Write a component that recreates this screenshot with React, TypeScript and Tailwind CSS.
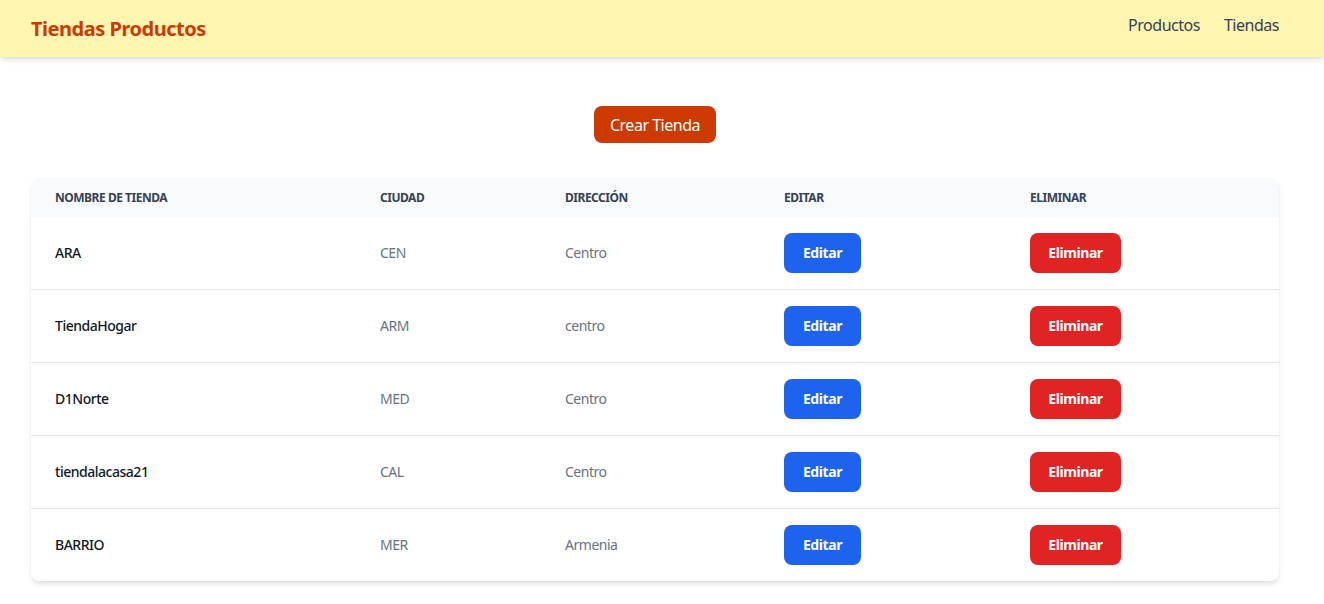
import React from "react";

const rows = [
  { name: "ARA", city: "CEN", addr: "Centro" },
  { name: "TiendaHogar", city: "ARM", addr: "centro" },
  { name: "D1Norte", city: "MED", addr: "Centro" },
  { name: "tiendalacasa21", city: "CAL", addr: "Centro" },
  { name: "BARRIO", city: "MER", addr: "Armenia" },
];

export default function App() {
  return (
    <div className="min-h-screen bg-white tracking-[-0.03em]" style={{ fontFamily: '"Noto Sans", "Open Sans", sans-serif' }}>
      <header className="h-[57px] bg-[#fef5b1] shadow-md flex items-center justify-between pl-[31px] pr-[45px]">
        <h1 className="text-xl font-bold text-[#cc3a00]">Tiendas Productos</h1>
        <nav className="flex gap-6 text-base text-gray-700 pb-[7px]">
          <a>Productos</a>
          <a>Tiendas</a>
        </nav>
      </header>
      <main className="pl-[31px] pr-[45px]">
        <div className="flex justify-center pt-[49px] pb-[35px]">
          <button className="h-[37px] px-4 rounded-lg bg-[#cc3a00] text-white text-base tracking-[-0.03em]">Crear Tienda</button>
        </div>
        <div className="rounded-lg shadow-md overflow-hidden bg-white">
          <table className="w-full text-left table-fixed">
            <thead className="bg-gray-50">
              <tr className="h-[39px] text-xs font-bold uppercase text-gray-700">
                <th className="w-[325px] px-6">Nombre de tienda</th>
                <th className="w-[185px] px-6">Ciudad</th>
                <th className="w-[219px] px-6">Dirección</th>
                <th className="w-[246px] px-6">Editar</th>
                <th className="px-6">Eliminar</th>
              </tr>
            </thead>
            <tbody>
              {rows.map((r, i) => (
                <tr key={r.name} className={i < rows.length - 1 ? "border-b border-gray-200" : ""}>
                  <td className="px-6 py-4 text-sm font-medium text-gray-900">{r.name}</td>
                  <td className="px-6 py-4 text-sm text-gray-500">{r.city}</td>
                  <td className="px-6 py-4 text-sm text-gray-500">{r.addr}</td>
                  <td className="px-6 py-4">
                    <button className="h-10 w-[77px] rounded-lg bg-[#1d63ed] text-white text-sm font-bold tracking-[-0.03em]">Editar</button>
                  </td>
                  <td className="px-6 py-4">
                    <button className="h-10 w-[91px] rounded-lg bg-[#e02424] text-white text-sm font-bold tracking-[-0.03em]">Eliminar</button>
                  </td>
                </tr>
              ))}
            </tbody>
          </table>
        </div>
      </main>
    </div>
  );
}
